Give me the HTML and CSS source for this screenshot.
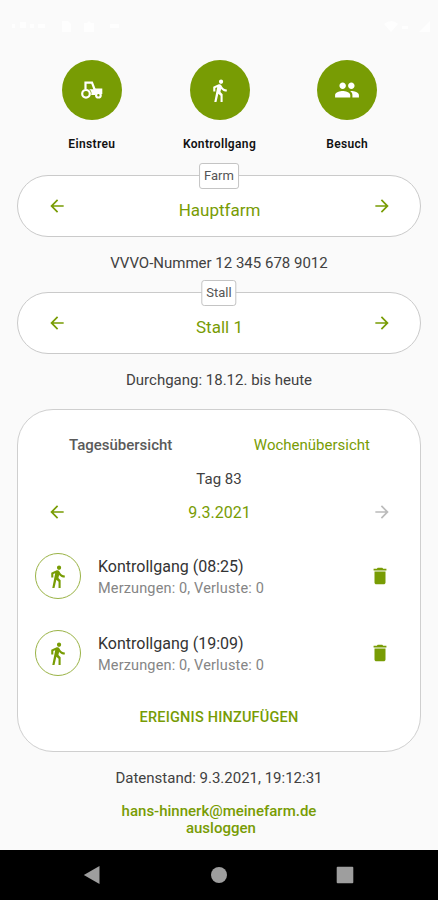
FILE: index.html
```html
<!DOCTYPE html>
<html lang="de">
<head>
    <meta charset="UTF-8">
    <meta name="viewport" content="width=device-width, initial-scale=1.0">
    <title>Meine Farm</title>
    <link rel="stylesheet" href="styles.css">
</head>
<body>
    <!-- icons used more than once -->
    <svg class="sprite">
        <symbol id="walk" viewBox="0 0 24 24">
            <path d="M13.500 5.500c1.100 0 2-.9 2-2s-.9-2-2-2-2 .9-2 2 .9 2 2 2zM9.800 8.900L7 23h2.100l1.800-8 2.100 2v6h2v-7.500l-2.100-2 .6-3C14.800 12 16.800 13 19 13v-2c-1.900 0-3.500-1-4.300-2.400l-1-1.600c-.4-.6-1-1-1.700-1-.3 0-.5.1-.8.1L6 8.300V13h2V9.600l1.800-.7"/>
        </symbol>
        <symbol id="back" viewBox="0 0 24 24">
            <path d="M20 11H7.830l5.590-5.590L12 4l-8 8 8 8 1.410-1.410L7.830 13H20v-2z"/>
        </symbol>
        <symbol id="forward" viewBox="0 0 24 24">
            <path d="M12 4l-1.410 1.410L16.170 11H4v2h12.170l-5.580 5.590L12 20l8-8z"/>
        </symbol>
        <symbol id="trash" viewBox="0 0 24 24">
            <path d="M6 19c0 1.100.9 2 2 2h8c1.100 0 2-.9 2-2V7H6v12zM19 4h-3.500l-1-1h-5l-1 1H5v2h14V4z"/>
        </symbol>
    </svg>

    <div class="status-bar">
        <svg viewBox="0 0 438 14">
            <path d="M12 5h3v4h-3zM20 3h6v6h-6zM30 5h4v4h-4zM38 5h7v4h-7zM62 2h6l3 3v8h-9zM84 4h3l2-2 2 2h3v9H84zM110 5h9v4h-9zM384 5q8-6 14 0l-7 8zM402 7h6v3h-6zM430 2v11h-11z"/>
        </svg>
    </div>

    <div class="actions">
        <div class="action">
            <div class="action-circle">
                <svg class="icon-tractor" viewBox="0 0 22 18">
                    <path class="line" d="M4.500 8V1.600h6.500l2.800 7.400"/>
                    <circle class="line" cx="5" cy="12.800" r="3.800"/>
                    <circle class="line" cx="17.400" cy="14.200" r="2.300"/>
                    <path d="M8 8.200h6V7.500h7.300v5.500h-1.200a3.400 3.400 0 0 0-6 1H10.200a5 5 0 0 0-2.200-5.800z"/>
                </svg>
            </div>
            <span>Einstreu</span>
        </div>
        <div class="action">
            <div class="action-circle"><svg class="icon icon-walk"><use href="#walk"/></svg></div>
            <span>Kontrollgang</span>
        </div>
        <div class="action">
            <div class="action-circle">
                <svg class="icon" viewBox="0 0 24 24">
                    <path d="M16 11c1.660 0 2.990-1.340 2.990-3S17.660 5 16 5c-1.660 0-3 1.340-3 3s1.340 3 3 3zm-8 0c1.660 0 2.990-1.340 2.990-3S9.660 5 8 5C6.340 5 5 6.340 5 8s1.340 3 3 3zm0 2c-2.330 0-7 1.170-7 3.500V19h14v-2.500c0-2.330-4.670-3.500-7-3.500zm8 0c-.29 0-.62.020-.97.050 1.160.84 1.970 1.970 1.970 3.450V19h6v-2.500c0-2.330-4.670-3.500-7-3.500z"/>
                </svg>
            </div>
            <span>Besuch</span>
        </div>
    </div>

    <div class="picker">
        <span class="picker-label">Farm</span>
        <svg class="arrow"><use href="#back"/></svg>
        <span class="picker-value">Hauptfarm</span>
        <svg class="arrow"><use href="#forward"/></svg>
    </div>
    <p class="info">VVVO-Nummer 12 345 678 9012</p>

    <div class="picker">
        <span class="picker-label">Stall</span>
        <svg class="arrow"><use href="#back"/></svg>
        <span class="picker-value">Stall 1</span>
        <svg class="arrow"><use href="#forward"/></svg>
    </div>
    <p class="info">Durchgang: 18.12. bis heute</p>

    <div class="card">
        <div class="tabs">
            <span class="tab active">Tagesübersicht</span>
            <span class="tab">Wochenübersicht</span>
        </div>
        <div class="day">Tag 83</div>
        <div class="date-row">
            <svg class="arrow"><use href="#back"/></svg>
            <span>9.3.2021</span>
            <svg class="arrow disabled"><use href="#forward"/></svg>
        </div>
        <div class="event">
            <div class="event-circle"><svg class="icon-walk"><use href="#walk"/></svg></div>
            <div class="event-text">
                <div class="event-title">Kontrollgang (08:25)</div>
                <div class="event-sub">Merzungen: 0, Verluste: 0</div>
            </div>
            <svg class="trash"><use href="#trash"/></svg>
        </div>
        <div class="event">
            <div class="event-circle"><svg class="icon-walk"><use href="#walk"/></svg></div>
            <div class="event-text">
                <div class="event-title">Kontrollgang (19:09)</div>
                <div class="event-sub">Merzungen: 0, Verluste: 0</div>
            </div>
            <svg class="trash"><use href="#trash"/></svg>
        </div>
        <div class="add">EREIGNIS HINZUFÜGEN</div>
    </div>

    <p class="updated">Datenstand: 9.3.2021, 19:12:31</p>
    <div class="account">hans-hinnerk@meinefarm.de<br>&nbsp;ausloggen</div>

    <div class="nav-bar">
        <svg viewBox="0 0 18 20"><path d="M16.500 1v18L.8 10z"/></svg>
        <svg viewBox="0 0 18 20"><circle cx="9" cy="10" r="8"/></svg>
        <svg viewBox="0 0 18 20"><rect x=".7" y="1.700" width="16.600" height="16.600" rx="1"/></svg>
    </div>
</body>
</html>
```
FILE: styles.css
```css
* {
    box-sizing: border-box;
}
body {
    margin: 0;
    height: 900px;
    display: flex;
    flex-direction: column;
    background-color: #fafafa;
    color: #414141;
    font-family: Roboto, sans-serif;
    font-size: 15px;
    overflow: hidden;
}
svg {
    display: block;
    fill: currentColor;
}
.sprite {
    position: absolute;
    width: 0;
    height: 0;
}
.status-bar {
    height: 60px;
    padding-top: 19px;
    color: #fefefe;
}
.status-bar svg {
    width: 438px;
    height: 14px;
}
.actions {
    display: flex;
    justify-content: space-between;
    height: 115px;
    padding: 0 27px 0 28px;
}
.action {
    display: flex;
    flex-direction: column;
    align-items: center;
    width: 128px;
    color: #111;
    font-size: 12px;
    font-weight: 600;
    letter-spacing: 0.35px;
    line-height: 16px;
}
.action-circle {
    display: flex;
    align-items: center;
    justify-content: center;
    width: 60px;
    height: 60px;
    margin-bottom: 16px;
    border-radius: 50%;
    background-color: #789c04;
    color: #fff;
}
.action-circle .icon {
    width: 26px;
    height: 26px;
}
.icon-tractor {
    width: 22px;
    height: 18px;
}
.action-circle .icon-walk,
.icon-walk {
    width: 25px;
    height: 25px;
    margin-right: 1px;
}
.line {
    fill: none;
    stroke: currentColor;
    stroke-width: 2.2;
}
.picker {
    position: relative;
    display: flex;
    align-items: center;
    justify-content: space-between;
    height: 62px;
    margin: 0 17px;
    padding: 0 28px 0 29px;
    border: 1px solid #cacaca;
    border-radius: 31px;
    background-color: #fff;
    color: #789c04;
}
.picker-label {
    position: absolute;
    top: -13px;
    left: 50%;
    transform: translateX(-50%);
    height: 26px;
    padding: 0 4px;
    border: 1px solid #c4c4c4;
    border-radius: 3px;
    background-color: #fff;
    color: #555;
    font-size: 13px;
    line-height: 23px;
}
.picker-value {
    padding-top: 8px;
    font-size: 17px;
}
.arrow {
    width: 20px;
    height: 20px;
}
.info {
    height: 55px;
    margin: 0;
    padding-top: 16px;
    line-height: 20px;
    text-align: center;
}
.card {
    height: 343px;
    margin: 0 17px;
    padding: 25px 17px 0;
    border: 1px solid #cfcfcf;
    border-radius: 36px;
    background-color: #fff;
}
.tabs {
    display: flex;
    justify-content: space-between;
    padding: 0 33px 0 34px;
    line-height: 20px;
}
.tab {
    color: #789c04;
}
.tab.active {
    color: #5a5a5a;
    font-weight: 500;
}
.day {
    margin-top: 14px;
    line-height: 20px;
    text-align: center;
}
.date-row {
    display: flex;
    align-items: center;
    justify-content: space-between;
    height: 20px;
    margin: 13px 0 31px;
    padding: 0 11px 0 12px;
    color: #789c04;
    font-size: 16px;
}
.disabled {
    color: #bbb;
}
.event {
    display: flex;
    align-items: center;
    height: 46px;
    margin-bottom: 31px;
    padding-right: 12px;
}
.event-circle {
    display: flex;
    align-items: center;
    justify-content: center;
    width: 46px;
    height: 46px;
    border: 1px solid #9ab346;
    border-radius: 50%;
    color: #789c04;
}
.event-text {
    flex: 1;
    padding: 2px 0 0 17px;
}
.event-title {
    color: #333;
    font-size: 16px;
    line-height: 22px;
}
.event-sub {
    color: #858585;
    font-size: 14.5px;
    letter-spacing: 0.15px;
    line-height: 21px;
}
.trash {
    width: 22px;
    height: 22px;
    color: #789c04;
}
.add {
    padding-top: 1px;
    color: #789c04;
    font-size: 14.5px;
    font-weight: 500;
    letter-spacing: 0.2px;
    line-height: 20px;
    text-align: center;
}
.updated {
    margin: 16px 0 15px;
    line-height: 20px;
    text-align: center;
}
.account {
    color: #789c04;
    font-weight: 500;
    line-height: 17px;
    text-align: center;
}
.nav-bar {
    display: flex;
    align-items: center;
    justify-content: space-between;
    height: 50px;
    margin-top: auto;
    padding: 0 84px 0 83px;
    background-color: #000;
    color: #9e9e9e;
}
.nav-bar svg {
    width: 18px;
    height: 20px;
}
```
